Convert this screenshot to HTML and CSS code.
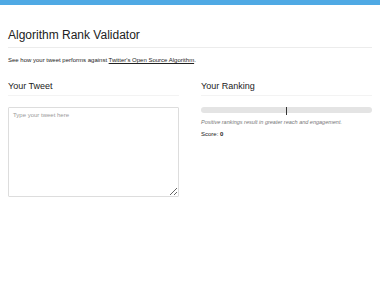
FILE: index.html
```html
<!DOCTYPE html>
<html lang="en">
<head>
    <meta charset="UTF-8">
    <meta name="viewport" content="width=device-width, initial-scale=1.0">
    <title>Algorithm Rank Validator</title>
    <link rel="stylesheet" href="styles.css">
</head>
<body>
<div class="top-bar"></div>
<div class="page">
    <h1 class="title">Algorithm Rank Validator</h1>
    <p class="intro">See how your tweet performs against <a href="#">Twitter's Open Source Algorithm</a>.</p>

    <div class="columns">
        <div class="column">
            <h2 class="section-title">Your Tweet</h2>
            <textarea class="tweet-input" placeholder="Type your tweet here"></textarea>
        </div>
        <div class="column">
            <h2 class="section-title">Your Ranking</h2>
            <div class="rank-track">
                <div class="rank-thumb"></div>
            </div>
            <p class="rank-note">Positive rankings result in greater reach and engagement.</p>
            <p class="score">Score: <b>0</b></p>
        </div>
    </div>
</div>
</body>
</html>
```

FILE: styles.css
```css
body {
    margin: 0;
    font-family: "Liberation Sans", Arial, sans-serif;
    color: #222;
    background: #fff;
}

.top-bar {
    height: 5px;
    background-color: #4fa9e4;
}

.page {
    padding: 0 8px;
}

.title {
    margin: 23px 0 0 0;
    padding-bottom: 5px;
    font-size: 12px;
    font-weight: normal;
    line-height: 14px;
    border-bottom: 1px solid #ececec;
}

.intro {
    margin: 8px 0 0 0;
    font-size: 6px;
    line-height: 8px;
}

.intro a {
    color: #222;
}

.columns {
    display: flex;
    gap: 22px;
    margin-top: 17px;
}

.column {
    flex: 1;
}

.section-title {
    margin: 0;
    padding-bottom: 3px;
    font-size: 9px;
    font-weight: normal;
    line-height: 11px;
    border-bottom: 1px solid #f3f3f3;
}

.tweet-input {
    display: block;
    box-sizing: border-box;
    width: 100%;
    height: 90px;
    margin-top: 11px;
    padding: 4px;
    font-family: "Liberation Sans", Arial, sans-serif;
    font-size: 6px;
    border: 1px solid #ddd;
    border-radius: 1px;
}

.tweet-input::placeholder {
    color: #9a9a9a;
}

.rank-track {
    position: relative;
    height: 6px;
    margin-top: 11px;
    background: #e4e4e4;
    border-radius: 3px;
}

.rank-thumb {
    position: absolute;
    left: 85px;
    top: 0;
    width: 1px;
    height: 8px;
    background: #333;
}

.rank-note {
    margin: 6px 0 0 0;
    font-size: 5.5px;
    font-style: italic;
    line-height: 7px;
    color: #777;
}

.score {
    margin: 4px 0 0 0;
    font-size: 6px;
    line-height: 8px;
}
```
